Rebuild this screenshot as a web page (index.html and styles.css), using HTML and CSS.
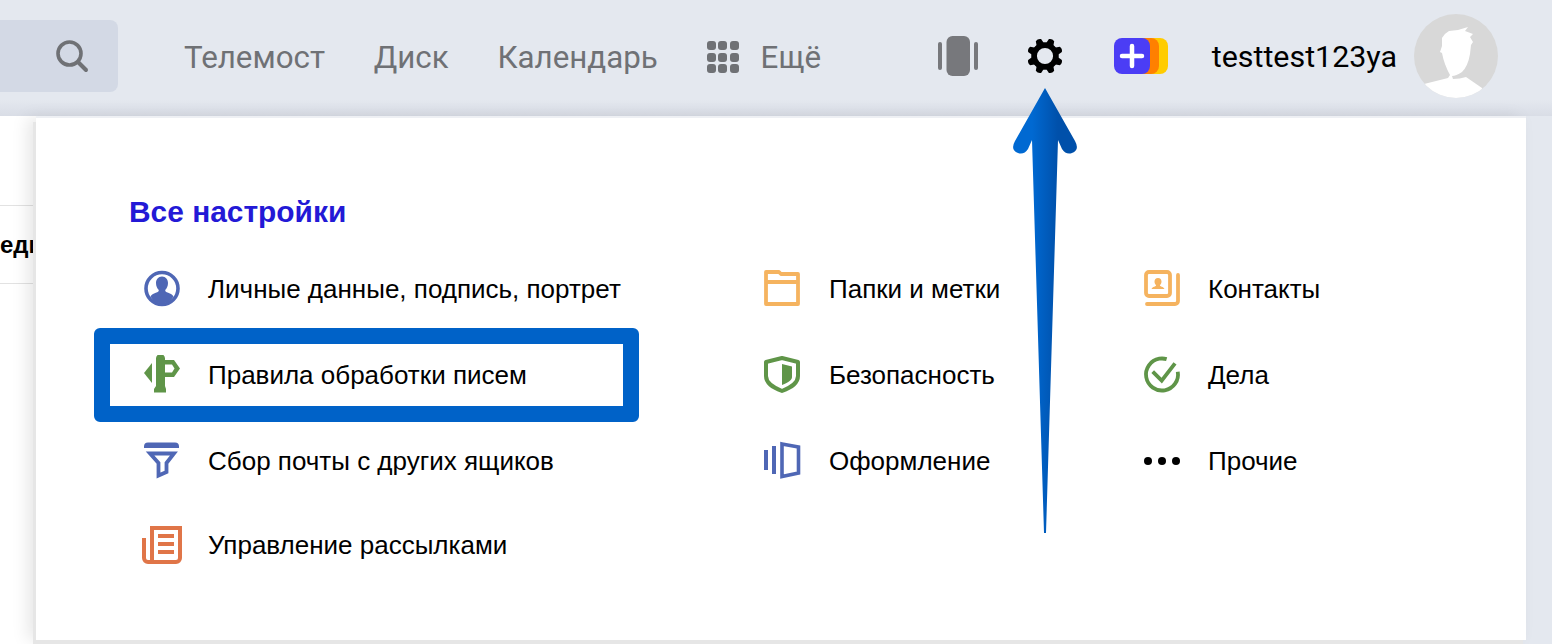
FILE: index.html
```html
<!DOCTYPE html>
<html lang="ru">
<head>
<meta charset="utf-8">
<title>Все настройки</title>
<link rel="stylesheet" href="styles.css">
</head>
<body>
<div class="app">
  <header class="topbar">
    <div class="search">
      <svg class="search-icon" width="34" height="34" viewBox="0 0 34 34"><circle cx="14.500" cy="14.500" r="11.500" fill="none" stroke="#6f7175" stroke-width="3.600"/><path d="M23 23l8 8" stroke="#6f7175" stroke-width="4" stroke-linecap="round"/></svg>
    </div>
    <nav class="nav">
      <a class="nav-link">Телемост</a>
      <a class="nav-link">Диск</a>
      <a class="nav-link">Календарь</a>
      <a class="nav-more">
        <span class="dots"><i></i><i></i><i></i><i></i><i></i><i></i><i></i><i></i><i></i></span>
        <span class="nav-link">Ещё</span>
      </a>
    </nav>
    <div class="tools">
      <svg class="tool-layout" width="40" height="40" viewBox="0 0 40 40"><rect x="0" y="6" width="4" height="28" rx="2" fill="#77787c"/><rect x="8.500" y="0" width="23.500" height="40" rx="6" fill="#77787c"/><rect x="36" y="6" width="4" height="28" rx="2" fill="#77787c"/></svg>
      <svg class="tool-gear" width="38" height="40" viewBox="0 0 40 42"><g transform="translate(0 1)"><circle cx="20" cy="20" r="11.500" fill="none" stroke="#000" stroke-width="6"/><g fill="#000"><path id="gearTooth" d="M15.500 9L17 2Q20 0 23 2L24.500 9z" transform="rotate(22.500 20 20)"/><path d="M15.500 9L17 2Q20 0 23 2L24.500 9z" transform="rotate(67.500 20 20)"/><path d="M15.500 9L17 2Q20 0 23 2L24.500 9z" transform="rotate(112.500 20 20)"/><path d="M15.500 9L17 2Q20 0 23 2L24.500 9z" transform="rotate(157.500 20 20)"/><path d="M15.500 9L17 2Q20 0 23 2L24.500 9z" transform="rotate(202.500 20 20)"/><path d="M15.500 9L17 2Q20 0 23 2L24.500 9z" transform="rotate(247.500 20 20)"/><path d="M15.500 9L17 2Q20 0 23 2L24.500 9z" transform="rotate(292.500 20 20)"/><path d="M15.500 9L17 2Q20 0 23 2L24.500 9z" transform="rotate(337.500 20 20)"/></g></g></svg>
      <svg class="tool-plus" width="54" height="36" viewBox="0 0 54 36"><rect x="24" y="0" width="30" height="36" rx="8" fill="#ffcc00"/><rect x="16" y="0" width="29" height="36" rx="8" fill="#ff8000"/><rect x="0" y="0" width="36" height="36" rx="8" fill="#4b3df5"/><path d="M18 8v20M8 18h20" stroke="#fff" stroke-width="4.500" stroke-linecap="round"/></svg>
      <span class="username">testtest123ya</span>
      <svg class="avatar" width="84" height="84" viewBox="1414 14 84 84"><defs><clipPath id="avatarClip"><circle cx="1456" cy="56" r="42"/></clipPath></defs><circle cx="1456" cy="56" r="42" fill="#d8d8d8"/><g clip-path="url(#avatarClip)" fill="#fff"><path d="M1424 84L1448 78L1450 75Q1444 64 1442 53L1440 52L1442 46L1442 38Q1445 33 1449 31L1458 30L1468 27L1465 31L1473 34L1470 37L1473 42L1471 45L1470 54Q1468 66 1462 72Q1456 76 1452 76L1453 79Q1460 79 1466 77L1482 88L1484 100L1424 100Z"/></g></svg>
    </div>
  </header>
  <main class="workspace">
    <aside class="page-edge">
      <div class="page-row">еди</div>
    </aside>
    <section class="panel">
      <h2 class="panel-title">Все настройки</h2>
      <div class="columns">
        <div class="column column-wide">
          <a class="item">
            <svg class="icon" viewBox="0 0 40 40"><circle cx="20" cy="19.500" r="16" fill="none" stroke="#4f67b5" stroke-width="3.600"/><path fill="#4f67b5" d="M20 7.500c3.800 0 6 3 6 6.500 0 3-1.200 5.500-2.800 7 0 1.500.8 2 3 2.800 2.500 1 4.300 2 5.300 3.700C28.500 32.500 24.500 34.500 20 34.500S11.500 32.500 8.500 27.500c1-1.700 2.800-2.700 5.300-3.700 2.200-.8 3-1.300 3-2.800-1.600-1.500-2.800-4-2.800-7C14 10.500 16.200 7.500 20 7.500z"/></svg>
            <span>Личные данные, подпись, портрет</span>
          </a>
          <a class="item item-boxed">
            <svg class="icon" viewBox="0 0 40 40"><path d="M38 13.500L32 5H23V3.500a4.500 4.500 0 0 0-9 0V31l-2 3v3.500h12V34l-1-3V22h9z" fill="#5f9548"/><path d="M23 9.500h7l2.500 4L30 17.500h-7z" fill="#fff"/><path d="M10 8v20l-8-10z" fill="#5f9548"/></svg>
            <span>Правила обработки писем</span>
          </a>
          <a class="item">
            <svg class="icon" viewBox="0 0 40 40"><path d="M2 7V5.500A4 4 0 0 1 6 1.500H33A4 4 0 0 1 37 5.500V7z" fill="#4f67b5"/><path d="M8 12.500H32L24.500 22V31L16.500 34.500V22z" fill="none" stroke="#4f67b5" stroke-width="3.800"/></svg>
            <span>Сбор почты с других ящиков</span>
          </a>
          <a class="item">
            <svg class="icon" viewBox="0 0 40 40"><path d="M2 13V33a4 4 0 0 0 4 4H34a4 4 0 0 0 4-4V3H10V35" fill="none" stroke="#e07548" stroke-width="4"/><path d="M16 9h16v4H16zM16 17h16v4H16zM16 25h16v4H16z" fill="#e07548"/></svg>
            <span>Управление рассылками</span>
          </a>
        </div>
        <div class="column column-mid">
          <a class="item">
            <svg class="icon" viewBox="0 0 40 40"><path d="M4 3H17l2 2H36V35H4z" fill="none" stroke="#f5b35f" stroke-width="3.800" stroke-linejoin="round"/><path d="M4 13h32" stroke="#f5b35f" stroke-width="4"/></svg>
            <span>Папки и метки</span>
          </a>
          <a class="item">
            <svg class="icon" viewBox="0 0 40 40"><path d="M20 3L36 7V21C36 28 30 32 20 36 10 32 4 28 4 21V7z" fill="none" stroke="#5f9548" stroke-width="4" stroke-linejoin="round"/><path d="M20 9l10 2.500V22c0 3-3 5-10 8z" fill="#5f9548"/></svg>
            <span>Безопасность</span>
          </a>
          <a class="item">
            <svg class="icon" viewBox="0 0 40 40"><path fill="#4f67b5" d="M2 9h4v20H2zM10 5h4v28h-4z"/><path d="M20 3L36.500 6V32L20 35.500z" fill="none" stroke="#4f67b5" stroke-width="3.600"/></svg>
            <span>Оформление</span>
          </a>
        </div>
        <div class="column">
          <a class="item">
            <svg class="icon" viewBox="0 0 40 40"><rect x="4" y="3" width="24" height="24" rx="3" fill="none" stroke="#f5b35f" stroke-width="3.800"/><path d="M36 6V32a3 3 0 0 1-3 3H5" fill="none" stroke="#f5b35f" stroke-width="3.800" stroke-linecap="round"/><path d="M16 9c2.300 0 3.500 1.800 3.500 3.600 0 1.800-.8 3-1.600 3.700 0 1.300 3.600 1.400 4.600 3.700H9.500c1-2.300 4.600-2.400 4.600-3.700-.8-.7-1.600-1.900-1.600-3.700C12.500 10.800 13.700 9 16 9z" fill="#f5b35f"/></svg>
            <span>Контакты</span>
          </a>
          <a class="item">
            <svg class="icon" viewBox="0 0 40 40"><circle cx="20" cy="19.500" r="16" fill="none" stroke="#5f9548" stroke-width="3.800" stroke-dasharray="82.400 18.100" transform="rotate(-10 20 19.500)"/><path d="M10.700 16.700l9 9L33 8.300" fill="none" stroke="#5f9548" stroke-width="3.800"/></svg>
            <span>Дела</span>
          </a>
          <a class="item">
            <svg class="icon" viewBox="0 0 40 40"><circle cx="6" cy="20" r="4" fill="#000"/><circle cx="20" cy="20" r="4" fill="#000"/><circle cx="34" cy="20" r="4" fill="#000"/></svg>
            <span>Прочие</span>
          </a>
        </div>
      </div>
    </section>
  </main>
  <svg class="arrow" width="80" height="460" viewBox="1005 80 80 460"><defs><linearGradient id="arrowFill" gradientUnits="userSpaceOnUse" x1="1032" y1="0" x2="1058" y2="0"><stop offset="0" stop-color="#0069d2"/><stop offset="1" stop-color="#0050aa"/></linearGradient></defs><path fill="url(#arrowFill)" d="M1045 88L1075 141Q1080 150 1072 153Q1066 155 1062 149L1058 140L1046 533H1044L1032 140L1028 149Q1024 155 1018 153Q1010 150 1015 141Z"/></svg>
</div>
</body>
</html>
```

FILE: styles.css
```css
*, *::before, *::after { box-sizing: border-box; }
html, body { margin: 0; padding: 0; }
body {
  width: 1552px;
  height: 644px;
  overflow: hidden;
  background: #e4e8ef;
  font-family: "Liberation Sans", Arial, sans-serif;
  color: #000;
}
.app { position: relative; width: 1552px; height: 644px; overflow: hidden; }

.topbar {
  display: flex;
  align-items: center;
  height: 116px;
  padding: 0 54px 4px 0;
  background: linear-gradient(to bottom, #e4e8ef 0, #e4e8ef 100px, #d9dde6 116px);
}
.search {
  display: flex;
  align-items: center;
  justify-content: flex-end;
  width: 118px;
  height: 72px;
  padding-right: 29px;
  background: #d3d9e5;
  border-radius: 0 8px 8px 0;
}
.search-icon { display: block; }
.nav {
  display: flex;
  align-items: center;
  gap: 48.8px;
  margin-left: 66px;
  padding-top: 2px;
  font-family: Roboto, "Liberation Sans", sans-serif;
}
.nav-link { font-size: 31.3px; color: #6f7175; white-space: nowrap; }
.nav-more { display: flex; align-items: center; gap: 22px; }
.dots {
  display: grid;
  grid-template-columns: repeat(3, 9px);
  grid-auto-rows: 9px;
  gap: 2.5px;
}
.dots i { display: block; background: #6f7175; border-radius: 3px; }
.tools { display: flex; align-items: center; margin-left: auto; }
.tool-gear { margin-left: 48px; }
.tool-plus { margin-left: 50px; }
.username {
  margin-left: 44px;
  font-family: Roboto, "Liberation Sans", sans-serif;
  font-size: 30.4px;
  white-space: nowrap;
}
.avatar { display: block; margin-left: 17px; }

.workspace { display: flex; height: 528px; }
.page-edge {
  width: 36px;
  padding-top: 89px;
  background: #fff;
  overflow: hidden;
}
.page-row {
  display: flex;
  align-items: center;
  height: 79px;
  border-top: 1px solid #e2e2e2;
  border-bottom: 1px solid #e2e2e2;
  font-size: 24px;
  font-weight: 700;
  white-space: nowrap;
}
.panel {
  width: 1490px;
  height: 522px;
  margin-top: 2px;
  padding: 76px 0 0 93px;
  background: #fff;
  box-shadow: 0 -2px 0 #eef0f4, -3px 4px 0 #e6e6e6, -8px 0 16px rgba(0, 0, 0, .1);
}
.panel-title {
  margin: 0;
  height: 36px;
  line-height: 36px;
  font-size: 29.9px;
  font-weight: 700;
  color: #2319d6;
}
.columns { display: flex; margin: 16px 0 0 15px; }
.column {
  display: grid;
  grid-template-rows: 86px 86px 86px 82px;
}
.column-wide { width: 620px; }
.column-mid { width: 380px; }
.column-mid .item { gap: 27px; }
.item {
  position: relative;
  display: flex;
  align-items: center;
  gap: 26px;
  font-size: 26px;
  white-space: nowrap;
}
.icon { display: block; flex: none; width: 40px; height: 40px; margin-left: -2px; }
.item-boxed::before {
  content: "";
  position: absolute;
  left: -50px;
  top: -4px;
  width: 545px;
  height: 94px;
  border: 16px solid #0062c8;
  border-radius: 6px;
}
.arrow { position: absolute; left: 1005px; top: 80px; }
```
